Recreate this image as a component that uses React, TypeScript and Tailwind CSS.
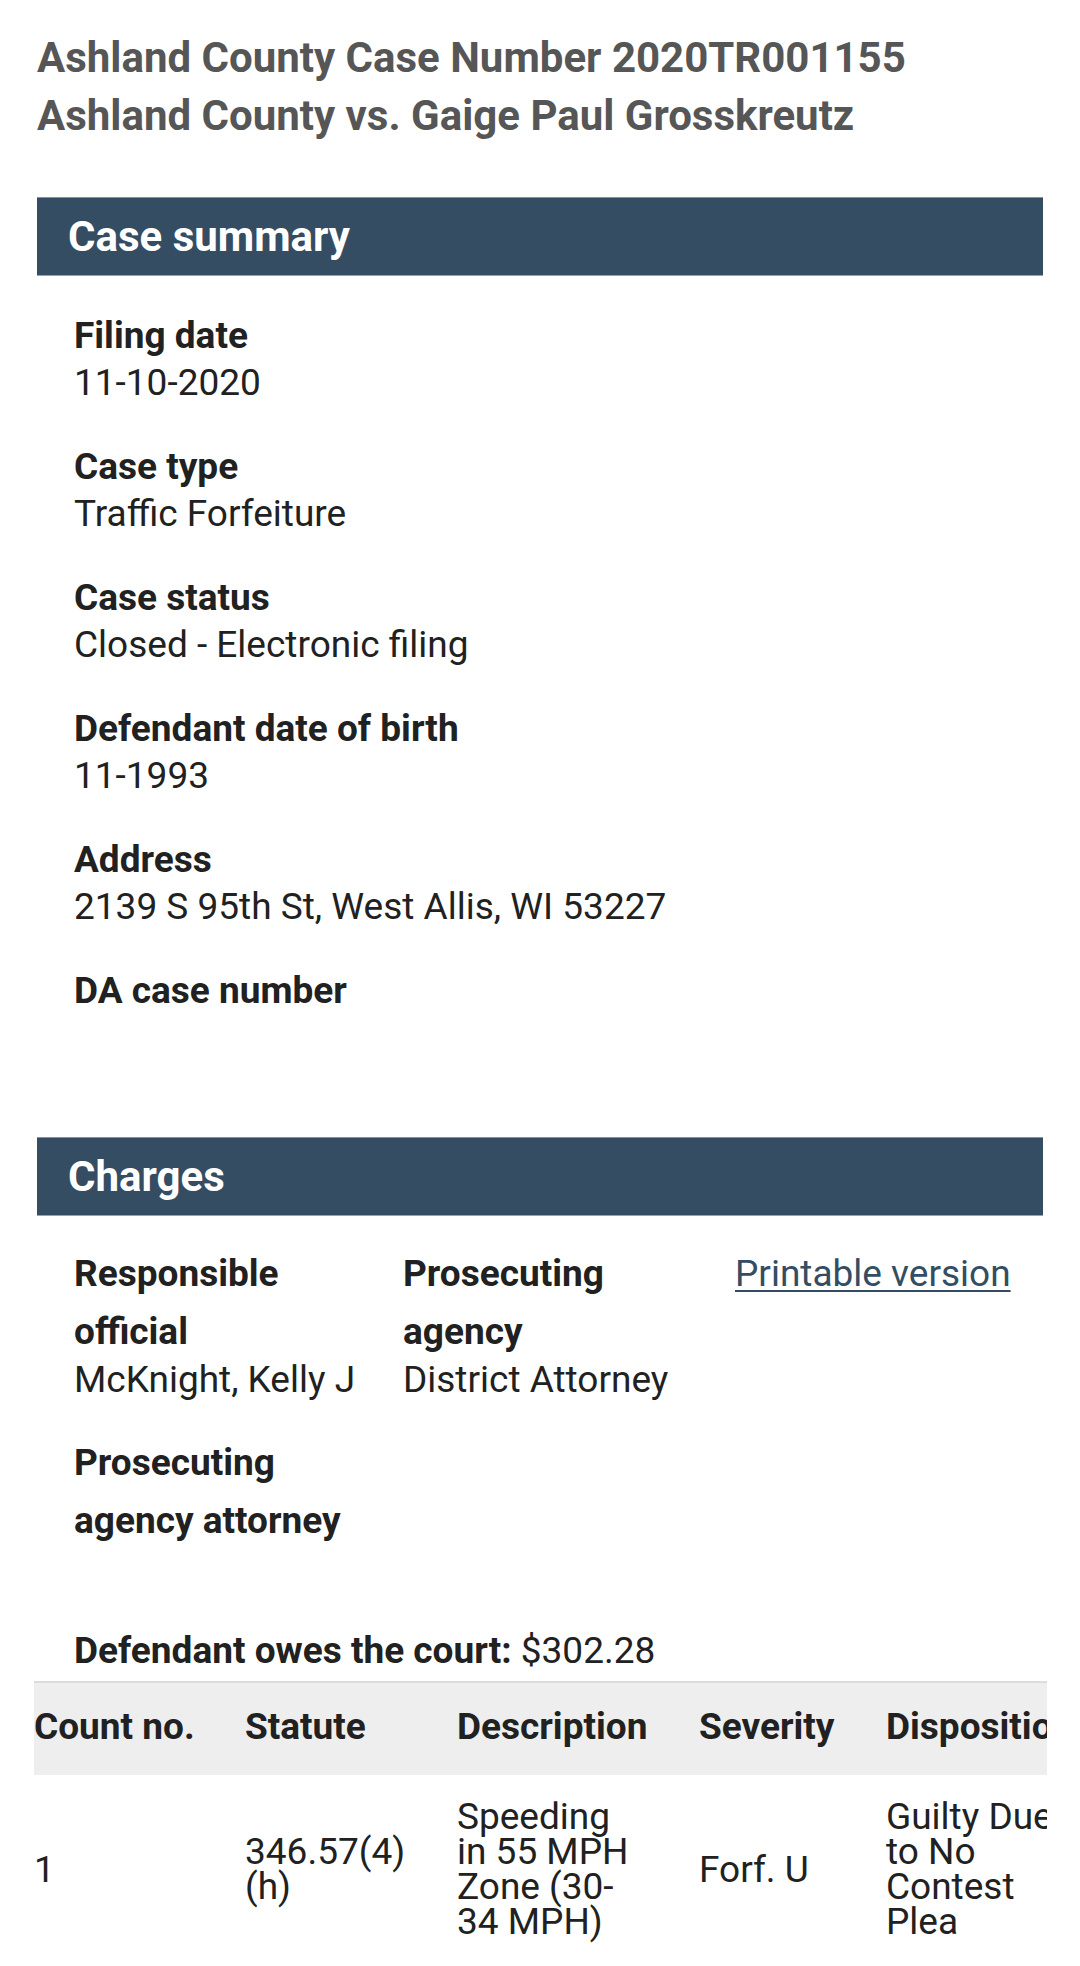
import React from 'react';

interface Field {
  label: string;
  value?: string;
}

const summary: Field[] = [
  { label: 'Filing date', value: '11-10-2020' },
  { label: 'Case type', value: 'Traffic Forfeiture' },
  { label: 'Case status', value: 'Closed - Electronic filing' },
  { label: 'Defendant date of birth', value: '11-1993' },
  { label: 'Address', value: '2139 S 95th St, West Allis, WI 53227' },
  { label: 'DA case number' },
];

// Section header bar used for "Case summary" and "Charges"
const SectionBar = ({ title }: { title: string }) => (
  <div className="h-[79px] flex items-center bg-[#344d63] border-t border-b border-t-[#7f93a4] border-b-[#8ea3b5] px-[31px]">
    <h2 className="text-[42px] font-bold text-white leading-none">{title}</h2>
  </div>
);

const App = () => {
  return (
    <div
      className="w-[1080px] min-h-[1966px] bg-white overflow-hidden px-[37px] pt-[29px]"
      style={{ fontFamily: 'Roboto, "Noto Sans", "Liberation Sans", sans-serif' }}
    >
      <h1 className="text-[42px] leading-[58px] font-bold text-[#565656]">
        Ashland County Case Number 2020TR001155
        <br />
        Ashland County vs. Gaige Paul Grosskreutz
      </h1>

      {/* Case summary */}
      <section className="mt-[52px]">
        <SectionBar title="Case summary" />
        <dl className="pl-[37px] pt-[36px] text-[37px] text-[#212121]">
          {summary.map((f) => (
            <div key={f.label} className="mb-[37px]">
              <dt className="font-bold leading-[47px]">{f.label}</dt>
              {f.value && <dd className="leading-[47px]">{f.value}</dd>}
            </div>
          ))}
        </dl>
      </section>

      {/* Charges */}
      <section className="mt-[123px]">
        <SectionBar title="Charges" />
        <div className="pl-[37px] pt-[29px] text-[37px] text-[#212121]">
          <div className="grid grid-cols-[317px_320px_auto] gap-x-[12px]">
            <div>
              <div className="font-bold leading-[58px]">Responsible official</div>
              <div className="leading-[38px]">McKnight, Kelly J</div>
            </div>
            <div>
              <div className="font-bold leading-[58px]">Prosecuting agency</div>
              <div className="leading-[38px]">District Attorney</div>
            </div>
            <div className="leading-[58px]">
              <a href="#" className="text-[#344d63] underline decoration-2 underline-offset-[4px]">
                Printable version
              </a>
            </div>
          </div>
          <div className="mt-[35px] w-[317px]">
            <div className="font-bold leading-[58px]">Prosecuting agency attorney</div>
          </div>
          <p className="mt-[77px] leading-[47px]">
            <span className="font-bold">Defendant owes the court:</span> $302.28
          </p>
        </div>

        <div className="ml-[-3px] w-[1013px] overflow-hidden mt-[7px] text-[37px] text-[#212121]">
          <div className="w-[1052px]">
            <div className="grid grid-cols-[211px_212px_242px_187px_200px] bg-[#eeeeee] border-t-2 border-[#dcdcdc] font-bold leading-[37px] whitespace-nowrap">
              <div className="pt-[25px] pb-[30px]">Count no.</div>
              <div className="pt-[25px] pb-[30px]">Statute</div>
              <div className="pt-[25px] pb-[30px]">Description</div>
              <div className="pt-[25px] pb-[30px]">Severity</div>
              <div className="pt-[25px] pb-[30px]">Disposition</div>
            </div>
            <div className="grid grid-cols-[211px_212px_242px_187px_200px] items-center leading-[35px] pt-[24px] pb-[27px] border-b-[3px] border-[#ececec]">
              <div>1</div>
              <div className="pr-[40px]">
                346.57(4)<wbr />(h)
              </div>
              <div className="pr-[64px]">Speeding in 55 MPH Zone (30-34 MPH)</div>
              <div>Forf. U</div>
              <div className="pr-[25px]">Guilty Due to No Contest Plea</div>
            </div>
          </div>
        </div>
      </section>
    </div>
  );
};

export default App;
